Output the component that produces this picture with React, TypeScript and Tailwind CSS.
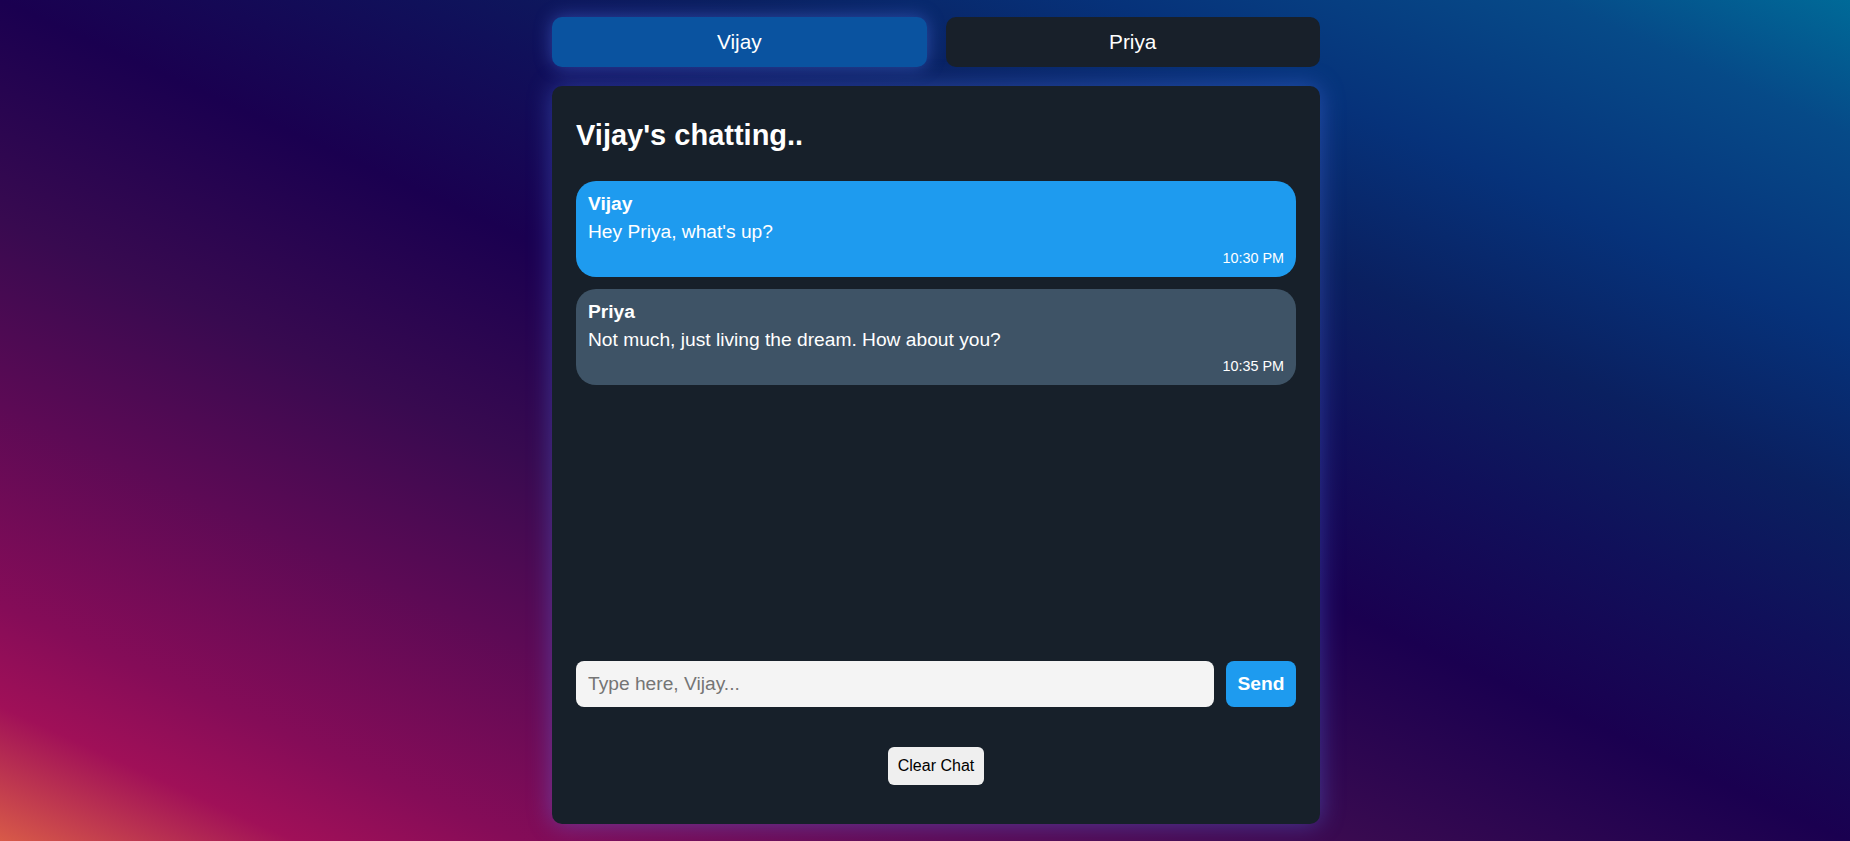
import React, { useState } from 'react';

type Message = {
  sender: 'Vijay' | 'Priya';
  text: string;
  time: string;
};

const initialMessages: Message[] = [
  { sender: 'Vijay', text: "Hey Priya, what's up?", time: '10:30 PM' },
  { sender: 'Priya', text: 'Not much, just living the dream. How about you?', time: '10:35 PM' },
];

const App: React.FC = () => {
  const [user, setUser] = useState<'Vijay' | 'Priya'>('Vijay');
  const [messages, setMessages] = useState<Message[]>(initialMessages);
  const [draft, setDraft] = useState('');

  const send = () => {
    if (!draft.trim()) return;
    const now = new Date();
    const time = now.toLocaleTimeString('en-US', { hour: 'numeric', minute: '2-digit' });
    setMessages([...messages, { sender: user, text: draft, time }]);
    setDraft('');
  };

  return (
    <div
      className="min-h-screen w-full bg-[linear-gradient(to_top_right,#d85a48_0%,#a01058_8%,#850c58_14%,#5c0a55_26%,#380a50_37%,#1a0050_50%,#10105a_61%,#0a2060_70%,#06327a_80%,#064a88_92%,#006a98_100%)] text-white"
      style={{ fontFamily: '"Liberation Sans", Arial, sans-serif' }}
    >
      <div className="flex justify-center pl-[22px] pt-[17px]">
        <div className="w-[768px]">
          {/* Tabs */}
          <div className="flex gap-[19px]">
            {(['Vijay', 'Priya'] as const).map((name) => (
              <button
                key={name}
                onClick={() => setUser(name)}
                className={`flex-1 h-[50px] rounded-[10px] text-[20.8px] leading-none text-white ${
                  user === name
                    ? 'bg-[#0a53a0] shadow-[0_0_18px_rgba(90,130,255,0.45)]'
                    : 'bg-[#18202a]'
                }`}
              >
                {name}
              </button>
            ))}
          </div>

          {/* Chat panel */}
          <div className="mt-[19px] h-[738px] rounded-[10px] bg-[#17202a] px-6 pt-6 pb-[39px] flex flex-col shadow-[0_0_24px_rgba(90,130,255,0.4)]">
            <h2 className="mt-[9px] text-[29px] leading-[33px] font-bold">{user}'s chatting..</h2>

            <div className="mt-[29px] h-[460px] flex flex-col gap-3 overflow-y-auto">
              {messages.map((m, i) => (
                <div
                  key={i}
                  className={`rounded-[20px] px-3 pt-3 pb-[10px] ${
                    m.sender === 'Vijay' ? 'bg-[#1e9bef]' : 'bg-[#3e5366]'
                  }`}
                >
                  <div className="text-[19.2px] leading-[22px] font-bold">{m.sender}</div>
                  <div className="mt-[6px] text-[19.2px] leading-[22px]">{m.text}</div>
                  <div className="mt-[7px] text-right text-[14.4px] leading-[17px]">{m.time}</div>
                </div>
              ))}
            </div>

            <div className="mt-5 flex gap-3">
              <input
                value={draft}
                onChange={(e) => setDraft(e.target.value)}
                onKeyDown={(e) => e.key === 'Enter' && send()}
                placeholder={`Type here, ${user}...`}
                className="flex-1 h-[46px] rounded-[8px] bg-[#f4f4f4] px-3 text-[19.2px] text-black placeholder:text-[#757575] outline-none"
              />
              <button
                onClick={send}
                className="w-[70px] h-[46px] rounded-[8px] bg-[#1e9bef] text-[19.2px] font-bold text-white"
              >
                Send
              </button>
            </div>

            <div className="mt-10 flex justify-center">
              <button
                onClick={() => setMessages([])}
                className="h-[38px] rounded-[6px] bg-[#efefef] px-[10px] text-[16px] text-black"
              >
                Clear Chat
              </button>
            </div>
          </div>
        </div>
      </div>
    </div>
  );
};

export default App;
